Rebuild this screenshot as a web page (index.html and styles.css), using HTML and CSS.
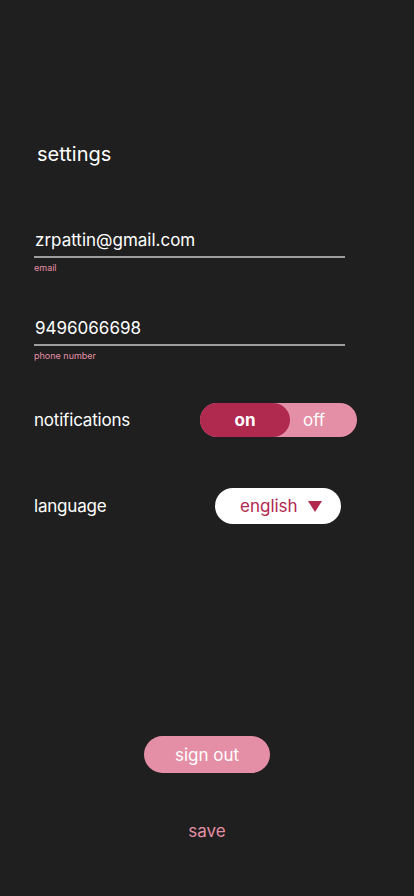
FILE: index.html
```html
<!DOCTYPE html>
<html>
<head>
<meta charset="utf-8">
<link rel="stylesheet" href="styles.css">
</head>
<body>
<div class="screen">
  <h1 class="title">settings</h1>
  <div class="field email-field">
    <div class="value">zrpattin@gmail.com</div>
    <div class="line"></div>
    <div class="label">email</div>
  </div>
  <div class="field phone-field">
    <div class="value">9496066698</div>
    <div class="line"></div>
    <div class="label">phone number</div>
  </div>
  <div class="row notif-row">
    <span class="row-label notif-label">notifications</span>
    <div class="toggle">
      <span class="toggle-on">on</span>
      <span class="toggle-off">off</span>
    </div>
  </div>
  <div class="row lang-row">
    <span class="row-label lang-label">language</span>
    <div class="select">
      <span class="select-text">english</span>
      <svg class="caret" width="14" height="11" viewBox="0 0 14 11"><polygon points="0,0 14,0 7,11" fill="#b0294f"/></svg>
    </div>
  </div>
  <div class="spacer"></div>
  <div class="actions">
    <button class="signout">sign out</button>
    <span class="save">save</span>
  </div>
</div>
</body>
</html>
```
FILE: styles.css
```css
html, body {
  margin: 0;
  padding: 0;
  background: #1f1f1f;
}
body {
  font-family: Inter, "Liberation Sans", sans-serif;
  color: #ffffff;
}
.screen {
  width: 414px;
  height: 896px;
  box-sizing: border-box;
  padding: 142px 0 0 34px;
  display: flex;
  flex-direction: column;
}
.title {
  margin: 0 0 0 3px;
  font-size: 20px;
  line-height: 24px;
  font-weight: 400;
}
.field {
  width: 311px;
}
.email-field {
  margin-top: 63px;
}
.phone-field {
  margin-top: 44px;
}
.value {
  font-size: 17px;
  line-height: 22px;
  margin-left: 1px;
}
.line {
  height: 2px;
  background: #9e9e9e;
  margin-top: 5px;
}
.label {
  font-size: 9px;
  line-height: 11px;
  color: #e48fa5;
  margin-top: 4px;
}
.row {
  display: flex;
  align-items: center;
}
.row-label {
  font-size: 17px;
  line-height: 22px;
  letter-spacing: -0.2px;
}
.notif-label {
  width: 166px;
}
.lang-label {
  width: 181px;
}
.notif-row {
  margin-top: 42px;
}
.toggle {
  width: 157px;
  height: 34px;
  border-radius: 17px;
  background: #e48fa5;
  display: flex;
  align-items: center;
  font-size: 17px;
}
.toggle-on {
  width: 90px;
  height: 34px;
  border-radius: 17px;
  background: #b0294f;
  font-weight: 700;
  display: flex;
  align-items: center;
  justify-content: center;
}
.toggle-off {
  padding-left: 13px;
}
.lang-row {
  margin-top: 51px;
}
.select {
  width: 126px;
  height: 36px;
  box-sizing: border-box;
  border-radius: 18px;
  background: #ffffff;
  display: flex;
  align-items: center;
  padding-left: 25px;
}
.select-text {
  color: #b0294f;
  font-size: 17px;
  line-height: 22px;
}
.caret {
  margin-left: 10px;
  margin-top: 1px;
}
.spacer {
  flex: 1;
}
.actions {
  display: flex;
  flex-direction: column;
  align-items: center;
  margin-left: -34px;
  padding-bottom: 54px;
}
.signout {
  width: 126px;
  height: 37px;
  border: none;
  border-radius: 18.5px;
  background: #e48fa5;
  color: #ffffff;
  font-family: Inter, "Liberation Sans", sans-serif;
  font-size: 17px;
  padding: 0;
}
.save {
  margin-top: 47px;
  color: #e48fa5;
  font-size: 17px;
  line-height: 22px;
}
```
